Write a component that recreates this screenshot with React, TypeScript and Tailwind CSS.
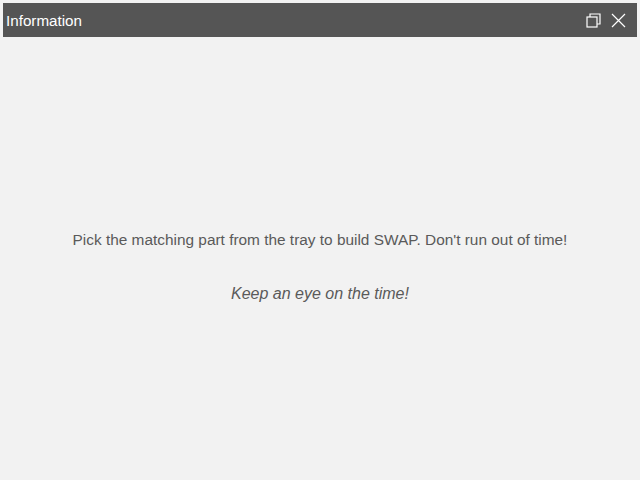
import React from 'react';

function App() {
  return (
    <div className="h-[480px] w-[640px] bg-[#f2f2f2] p-[3px] font-['Liberation_Sans',Arial,sans-serif]">
      <header className="flex h-[34px] items-center justify-between bg-[#555555] pl-[3px] pr-[11px]">
        <h1 className="pt-[2px] text-[15.2px] font-normal text-white">Information</h1>
        <div className="flex items-center gap-[10px] pt-[1px]">
          <svg width="15" height="15" viewBox="0 0 15 15" fill="none" stroke="white" strokeWidth="1.2">
            <rect x="1" y="4" width="10" height="10" />
            <path d="M4 4V1h10v10h-3" />
          </svg>
          <svg width="15" height="15" viewBox="0 0 15 15" fill="none" stroke="white" strokeWidth="1.2">
            <path d="M1 1l13 13M14 1L1 14" />
          </svg>
        </div>
      </header>
      <main className="flex flex-col items-center pt-[193px] text-[#5a5a5a]">
        <p className="text-[15.4px] leading-[20px]">Pick the matching part from the tray to build SWAP. Don't run out of time!</p>
        <p className="mt-[34px] text-[16px] italic leading-[20px]">Keep an eye on the time!</p>
      </main>
    </div>
  );
}

export default App;
